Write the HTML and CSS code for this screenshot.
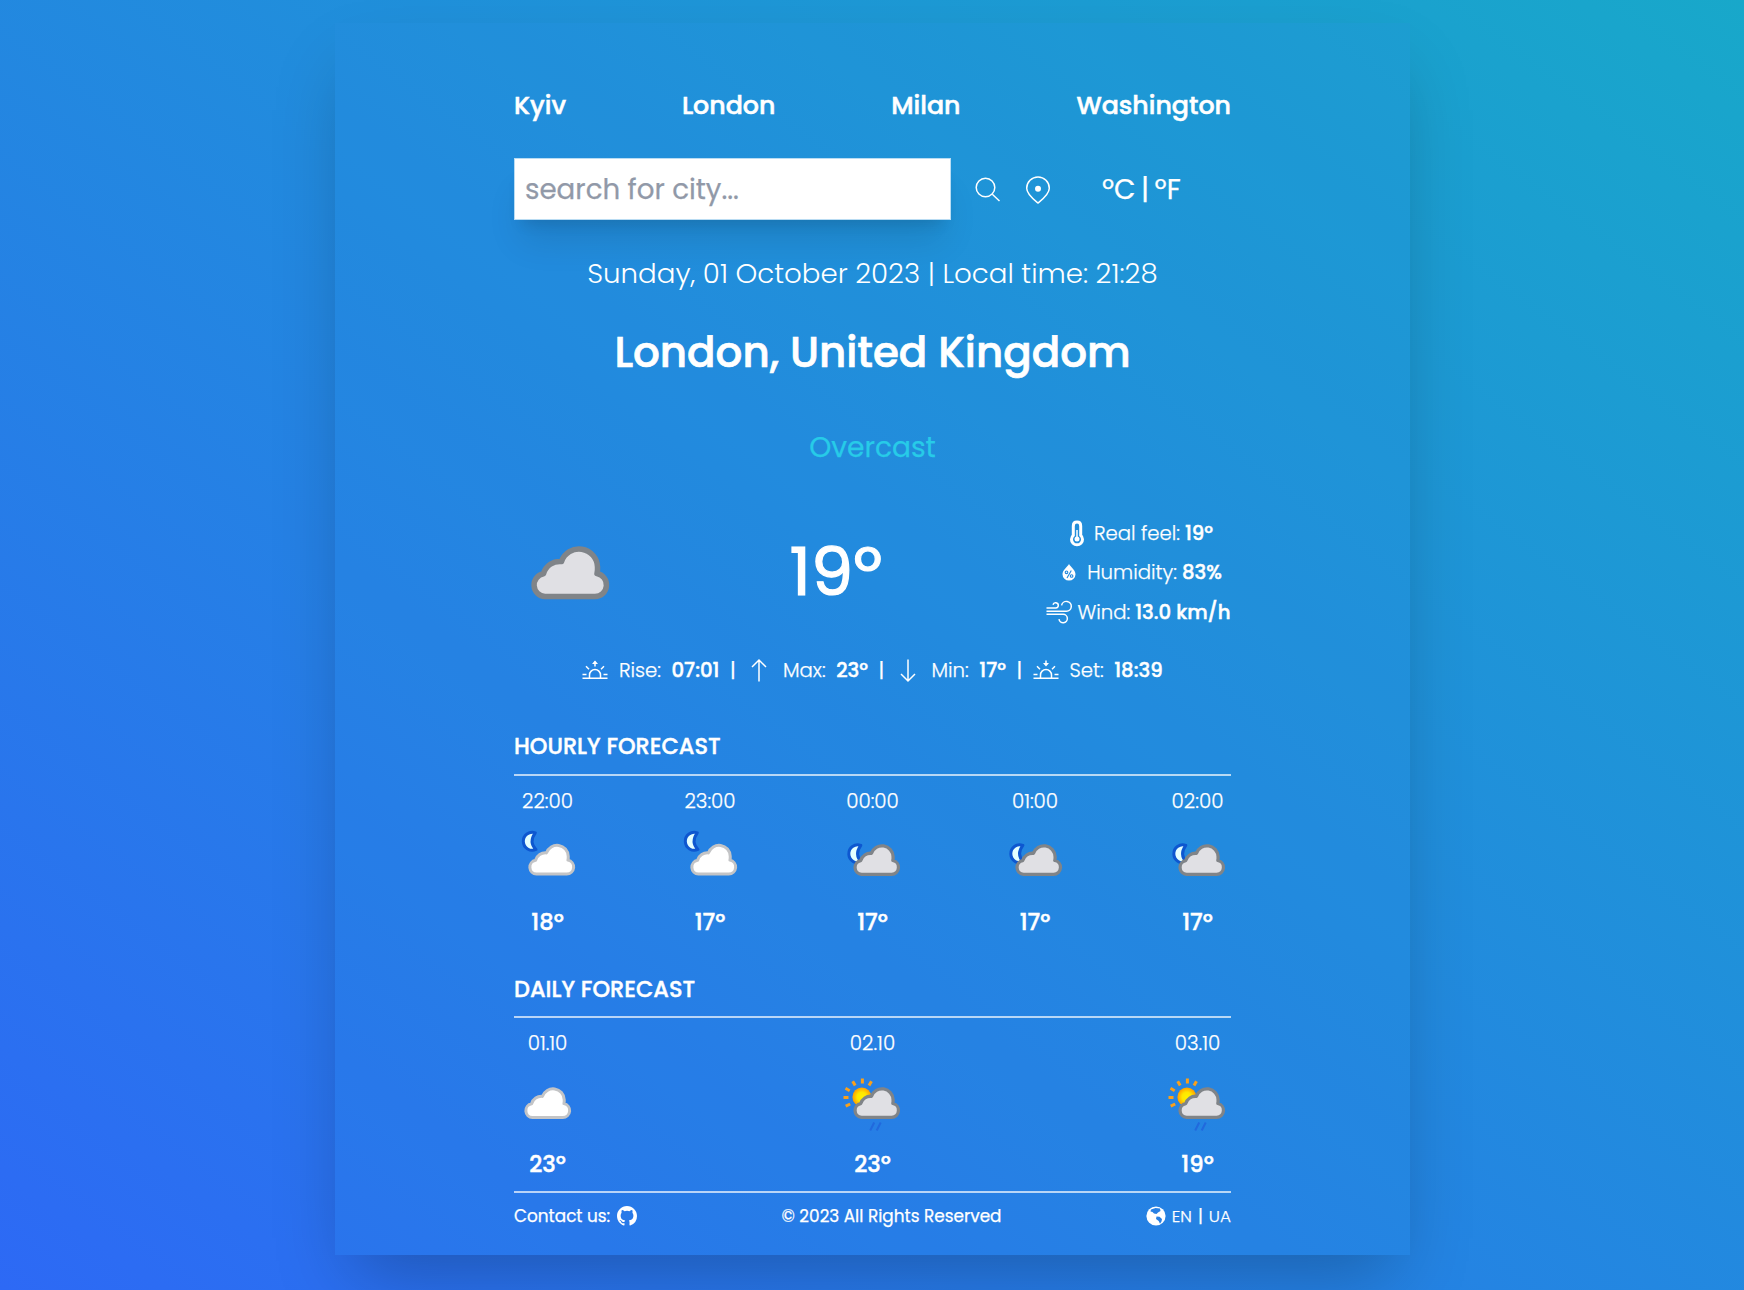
FILE: index.html
```html
<!DOCTYPE html>
<html lang="en">
<head>
<meta charset="utf-8">
<title>Weather</title>
<link rel="stylesheet" href="styles.css">
</head>
<body>
<svg class="defs" width="0" height="0">
  <defs>
    <radialGradient id="sun-fill"><stop offset="0" stop-color="#fff200"/><stop offset=".5" stop-color="#ffe600"/><stop offset="1" stop-color="#ff9d00"/></radialGradient>
    <path id="cloud" d="M14 50.500A11.500 11.500 0 0 1 12.500 27.700A17 17 0 0 1 30.500 15.500A18.500 18.500 0 0 1 66.500 21Q66.700 25 66 27.500A11.600 11.600 0 0 1 64 50.500z"/>
    <path id="moon" d="M14.300 1.800A9 9 0 1 0 15 18.500Q7.500 11 14.300 1.800z"/>
    <g id="horizon"><path d="M.5 18.300h25M.5 14.600h4M21.500 14.600h4M7.500 18v-3a5.500 5.500 0 0 1 11 0v3M4 6.300l3 3M22 6.300l-3 3"/></g>
    <g id="night-clear"><use href="#moon" class="moon" transform="translate(5 3)"/><use href="#cloud" class="light" transform="translate(12 15.500) scale(.605)"/></g>
    <g id="night-cloudy"><use href="#moon" class="moon" transform="translate(5.500 15.500)"/><use href="#cloud" class="dark" transform="translate(12.200 16) scale(.6)"/></g>
    <g id="day-rain">
      <path class="rays" d="M22.200 13.500v-5M15 15.500l-2.500-4.300M9.500 20.700l-4.200-2.400M8.300 27.500h-5M10 34l-4.500 2.200M28.800 15.500l2.500-4.300"/>
      <circle class="sun-disc" cx="21.700" cy="27" r="9.500"/>
      <use href="#cloud" class="dark" transform="translate(13 17) scale(.6)"/>
      <path class="rain" d="M34 52.500l-4 8M40.500 52.500l-4 8"/>
    </g>
  </defs>
</svg>
<main class="panel">
  <nav class="cities">
    <a>Kyiv</a><a>London</a><a>Milan</a><a>Washington</a>
  </nav>
  <div class="search">
    <input type="text" placeholder="search for city...">
    <svg class="glass" width="26" height="26" viewBox="0 0 26 26"><circle cx="10.500" cy="10.500" r="9.300"/><path d="M17.300 17.300l7.200 6.700"/></svg>
    <svg class="pin" width="26" height="28" viewBox="0 0 26 28"><path d="M13 27C10.500 25 1.700 18.500 1.700 12.300a11.300 11.300 0 0 1 22.600 0C24.300 18.500 15.500 25 13 27z"/><circle class="solid" cx="13" cy="12.800" r="3"/></svg>
    <div class="units"><span>ºC</span><i>|</i><span>ºF</span></div>
  </div>
  <p class="date">Sunday, 01 October 2023 | Local time: 21:28</p>
  <h1>London, United Kingdom</h1>
  <p class="status">Overcast</p>
  <section class="current">
    <svg width="112" height="112" viewBox="0 0 112 112"><use href="#cloud" class="dark" transform="translate(17 30)"/></svg>
    <div class="temp">19º</div>
    <ul class="facts">
      <li class="feel"><svg width="16" height="26" viewBox="0 0 16 26"><path d="M8 2.100c-2.600 0-3.700 1.700-3.700 3.800v9.400a5.500 5.500 0 1 0 7.400 0V5.900c0-2.200-1.100-3.800-3.700-3.800z" stroke-width="3"/><path d="M8 10v8" stroke-width="1.500"/><circle class="solid" cx="8" cy="18.900" r="2.500"/></svg><span>Real feel:</span><b>19º</b></li>
      <li class="hum"><svg width="14" height="17" viewBox="0 0 14 17"><path class="solid" d="M7 0c1.800 3 6.500 6 6.500 10.300a6.500 6.300 0 0 1-13 0C.5 6 5.200 3 7 0z"/><path class="cut" d="M9.300 6.500l-4.300 7.500"/><circle class="cut" cx="4.500" cy="8.300" r="1.300"/><circle class="cut" cx="9.600" cy="12" r="1.300"/></svg><span>Humidity:</span><b>83%</b></li>
      <li class="wind"><svg width="26" height="24" viewBox="0 0 26 24"><path d="M.5 8.100h9.300a2.700 2.700 0 1 0-2.800-3.400M.5 11.200h19.800a4.900 4.900 0 1 0-4.700-5.900M.5 14.300h16.600a4.200 4.200 0 1 1-4.100 4.800" stroke-width="1.500"/></svg><span>Wind:</span><b>13.0 km/h</b></li>
    </ul>
  </section>
  <section class="sun">
    <svg width="26" height="20" viewBox="0 0 26 20"><use href="#horizon"/><path d="M13 6.500V1.500"/><path class="solid" d="M10 4l3-3.500L16 4z"/></svg><span>Rise:</span><b>07:01</b><i>|</i>
    <svg class="arrow" width="16" height="23" viewBox="0 0 16 23"><path d="M8 22.500V1M1 8l7-7 7 7"/></svg><span>Max:</span><b>23º</b><i>|</i>
    <svg class="arrow" width="16" height="23" viewBox="0 0 16 23"><path d="M8 .5V22M1 15l7 7 7-7"/></svg><span>Min:</span><b>17º</b><i>|</i>
    <svg width="26" height="20" viewBox="0 0 26 20"><use href="#horizon"/><path d="M13 .5v4"/><path class="solid" d="M10 3l3 3.500L16 3z"/></svg><span>Set:</span><b>18:39</b>
  </section>
  <h2>HOURLY FORECAST</h2>
  <section class="forecast hourly">
    <article><p>22:00</p><svg width="64" height="64"><use href="#night-clear"/></svg><b>18º</b></article>
    <article><p>23:00</p><svg width="64" height="64"><use href="#night-clear"/></svg><b>17º</b></article>
    <article><p>00:00</p><svg width="64" height="64"><use href="#night-cloudy"/></svg><b>17º</b></article>
    <article><p>01:00</p><svg width="64" height="64"><use href="#night-cloudy"/></svg><b>17º</b></article>
    <article><p>02:00</p><svg width="64" height="64"><use href="#night-cloudy"/></svg><b>17º</b></article>
  </section>
  <h2 class="daily-title">DAILY FORECAST</h2>
  <section class="forecast daily">
    <article><p>01.10</p><svg width="64" height="64"><use href="#cloud" class="light" transform="translate(8 17) scale(.605)"/></svg><b>23º</b></article>
    <article><p>02.10</p><svg width="64" height="64"><use href="#day-rain" transform="translate(-.8 0)"/></svg><b>23º</b></article>
    <article><p>03.10</p><svg width="64" height="64"><use href="#day-rain" transform="translate(-.8 0)"/></svg><b>19º</b></article>
  </section>
  <footer>
    <div class="contact"><span>Contact us:</span><svg width="20" height="20" viewBox="0 0 16 16"><path class="solid" d="M8 0C3.580 0 0 3.580 0 8c0 3.540 2.290 6.530 5.470 7.590.4.070.55-.17.55-.38 0-.19-.01-.82-.01-1.490-2.010.37-2.530-.49-2.690-.94-.09-.23-.48-.94-.82-1.130-.28-.15-.68-.52-.01-.53.63-.01 1.080.58 1.230.82.72 1.210 1.870.87 2.330.66.07-.52.28-.87.51-1.070-1.780-.2-3.640-.89-3.640-3.950 0-.87.31-1.590.82-2.150-.08-.2-.36-1.020.08-2.120 0 0 .67-.21 2.200.82a7.500 7.500 0 0 1 4 0c1.530-1.040 2.200-.82 2.200-.82.44 1.100.16 1.920.08 2.120.51.56.82 1.270.82 2.150 0 3.070-1.870 3.750-3.650 3.950.29.25.54.73.54 1.480 0 1.070-.01 1.930-.01 2.200 0 .21.15.46.55.38A8.010 8.010 0 0 0 16 8c0-4.420-3.580-8-8-8z"/></svg></div>
    <span>© 2023 All Rights Reserved</span>
    <div class="lang"><svg width="20" height="20" viewBox="0 0 20 20"><circle class="solid" cx="10" cy="10" r="9.600"/><path class="land" d="M5 3.500L9.500 2l4.500.5.500 2.500-2.500 1.500L10.500 8 8 7.500 6.500 6 4.500 5.500zM10.500 10.500l3 .3 2.500 2.200-.5 2.500-1.500 2.300-1.300-2.800-2.700-2z"/></svg><span>EN</span><i>|</i><span>UA</span></div>
  </footer>
</main>
</body>
</html>
```
FILE: styles.css
```css
*{box-sizing:border-box}
body{margin:0;height:1290px;display:flex;flex-direction:column;align-items:center;overflow:hidden;background:linear-gradient(to top right,#2d69f5,#18a8ca);font-family:Poppins,Inter,sans-serif;color:#fff;-webkit-text-stroke:.25px}
p,h1,h2,ul{margin:0;padding:0;list-style:none}
i{font-style:normal}
b{font-weight:500;-webkit-text-stroke:.45px}
svg{fill:none;stroke:#fff;stroke-width:1.5;flex:none;display:block;overflow:visible}
.defs{position:absolute}
.solid{fill:#fff;stroke:none}
.cut{stroke:#2489dd;stroke-width:1.100}
.land{fill:#2880e4;stroke:none}
.moon{fill:#e4ffff;stroke:#0d57d0;stroke-width:3;stroke-linejoin:round}
.light{fill:#fff;stroke:#c3c4c6;stroke-width:5;stroke-linejoin:round}
.dark{fill:#e0e0e4;stroke:#808488;stroke-width:5.500;stroke-linejoin:round}
.rays{stroke:#f9a01b;stroke-width:3}
.sun-disc{fill:url(#sun-fill);stroke:none}
.rain{stroke:#2169dd;stroke-width:2}

.panel{width:1075px;height:1232px;margin:23px 0 0 1px;padding:57px 179px 0;background:rgba(40,137,222,.18);box-shadow:0 35px 70px -17px rgba(0,0,0,.25)}

.cities{display:flex;justify-content:space-between;height:50px;line-height:51px;font-size:25.300px;font-weight:500;-webkit-text-stroke:.5px}

.search{display:flex;align-items:center;height:62px;margin-top:28px}
.search input{width:437px;height:62px;padding:1px 10px 0;border:1px solid #b9dcf3;border-radius:0;background:#fff;font:400 27.700px Poppins,Inter,sans-serif;outline:0;box-shadow:0 28px 35px -7px rgba(0,0,0,.1),0 11px 14px -8px rgba(0,0,0,.12)}
.search input::placeholder{color:#9199a8;opacity:1;-webkit-text-stroke:.25px}
.glass{margin:1px 0 0 24px}
.pin{margin:1px 0 0 24px}
.units{display:flex;align-items:center;margin:1px 0 0 51px;font-size:27.800px;line-height:42px}
.units i{width:19px;text-align:center}

.date{height:40px;line-height:41px;margin-top:33px;text-align:center;font-size:27.650px;font-weight:300;white-space:nowrap;-webkit-text-stroke:0}
h1{height:60px;line-height:61px;margin-top:29px;text-align:center;font-size:42px;font-weight:500;white-space:nowrap;-webkit-text-stroke:.7px}
.status{height:40px;line-height:41px;margin-top:45px;text-align:center;font-size:28.100px;color:#27cbe8}

.current{display:flex;align-items:center;justify-content:space-between;height:120px;margin-top:45px}
.temp{font-size:67px;line-height:86px;-webkit-text-stroke:1.200px}
.facts{width:185px;font-size:19.700px}
.facts li{display:flex;align-items:center;justify-content:center;height:39.500px;white-space:nowrap}
.facts span,.sun span{font-weight:300}
.facts b{margin-left:5px}
.feel svg{margin:1px 9px 0 5px}
.hum svg{margin:1px 11px 0 7px}
.wind svg{margin-right:5px}

.sun{display:flex;align-items:center;justify-content:center;gap:10.600px;height:30px;margin-top:23px;font-size:19.700px;white-space:nowrap}
.sun .arrow{margin:0 5px}

h2{height:47px;line-height:35px;margin-top:44px;border-bottom:2px solid rgba(255,255,255,.68);font-size:22.450px;font-weight:500;-webkit-text-stroke:.4px}
.daily-title{height:46px;margin-top:36px}
.forecast{display:flex;justify-content:space-between}
.forecast article{display:flex;flex-direction:column;align-items:center;width:67px}
.forecast p{height:30px;line-height:31px;margin-top:10px;font-size:19.900px;font-weight:300}
.forecast svg{margin-top:12px}
.forecast b{height:30px;line-height:32px;margin-top:14px;font-size:22.700px}
.daily p{line-height:32px;margin-top:9px}
.daily svg{margin-top:12.500px}
.daily b{margin-top:14.500px}

footer{display:flex;justify-content:space-between;align-items:center;height:47px;margin-top:13px;border-top:2px solid rgba(255,255,255,.68);font-size:16.880px}
.contact,.lang{display:flex;align-items:center}
.contact svg{margin-left:7px}
.lang{font-weight:300}
.lang svg{margin-right:6px}
.lang i{width:17px;text-align:center;font-weight:400}
```
